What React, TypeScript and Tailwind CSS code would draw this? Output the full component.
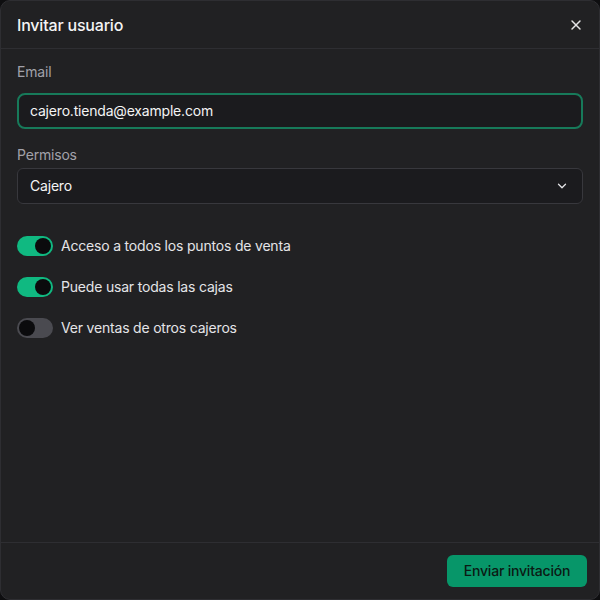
import React from "react";

function Toggle({ on }: { on: boolean }) {
  return (
    <span
      className={
        on
          ? "flex h-5 w-9 shrink-0 items-center justify-end rounded-full bg-[#10b981] p-0.5"
          : "flex h-5 w-9 shrink-0 items-center justify-start rounded-full bg-[#4a4a50] p-0.5"
      }
    >
      <span className="h-4 w-4 rounded-full bg-[#0b0b0d]" />
    </span>
  );
}

export default function App() {
  const items = [
    { label: "Acceso a todos los puntos de venta", on: true },
    { label: "Puede usar todas las cajas", on: true },
    { label: "Ver ventas de otros cajeros", on: false },
  ];
  return (
    <div
      className="h-[600px] w-[600px] bg-[#0e0e10] tracking-[-0.012em]"
      style={{ fontFamily: "Inter, 'Noto Sans', sans-serif" }}
    >
      <div className="flex h-full w-full flex-col overflow-hidden rounded-[10px] border border-[#2e2e32] bg-[#212123] text-[#f4f4f5]">
        <div className="flex h-12 shrink-0 items-center justify-between border-b border-[#2e2e32] pl-4 pr-[15px]">
          <span className="text-base font-medium text-[#f4f4f5]">Invitar usuario</span>
          <svg width="16" height="16" viewBox="0 0 24 24" fill="none" stroke="#e4e4e7" strokeWidth="2.2" strokeLinecap="round">
            <path d="M18 6L6 18M6 6l12 12" />
          </svg>
        </div>
        <div className="flex flex-1 flex-col px-4 pt-[13px]">
          <label className="text-sm leading-5 text-[#a1a1aa]">Email</label>
          <div className="mt-[11px] flex h-9 items-center rounded-lg border-2 border-[#177a5a] bg-[#1b1b1e] px-[11px] text-sm text-[#f4f4f5]">
            cajero.tienda@example.com
          </div>
          <label className="mt-4 text-sm leading-5 text-[#a1a1aa]">Permisos</label>
          <div className="mt-[3px] flex h-9 items-center justify-between rounded-md border border-[#38383d] bg-[#1b1b1e] pl-3 pr-[13px] text-sm text-[#f4f4f5]">
            <span>Cajero</span>
            <svg width="14" height="14" viewBox="0 0 24 24" fill="none" stroke="#e4e4e7" strokeWidth="2.2" strokeLinecap="round" strokeLinejoin="round">
              <path d="M6 9l6 6 6-6" />
            </svg>
          </div>
          <div className="mt-8 flex flex-col gap-[21px]">
            {items.map((it) => (
              <div key={it.label} className="flex items-center gap-2">
                <Toggle on={it.on} />
                <span className="text-sm text-[#e4e4e7]">{it.label}</span>
              </div>
            ))}
          </div>
        </div>
        <div className="flex h-[57px] shrink-0 items-center justify-end border-t border-[#2e2e32] px-3">
          <button className="h-8 w-[140px] rounded-md bg-[#079669] text-sm font-medium text-[#0b1a14]">
            Enviar invitación
          </button>
        </div>
      </div>
    </div>
  );
}
